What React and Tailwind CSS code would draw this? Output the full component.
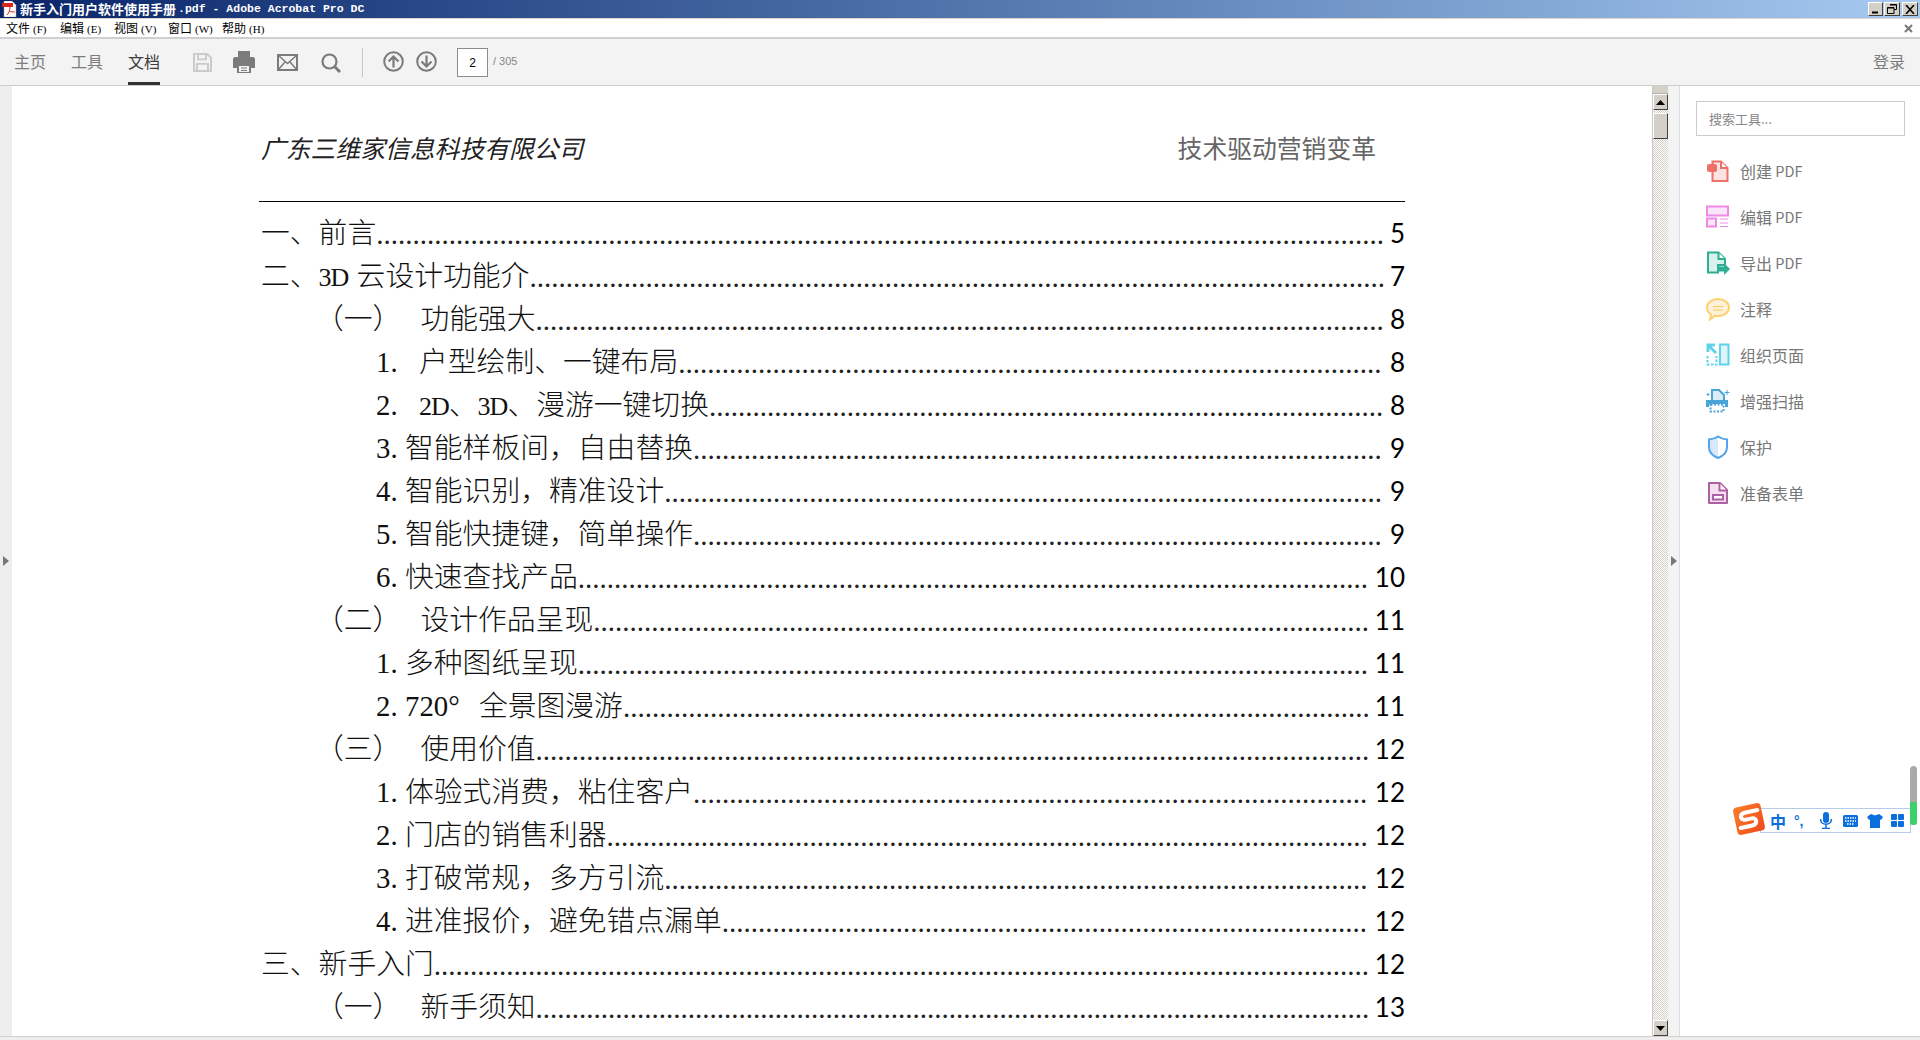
const cjk = "font-['Noto_Sans_CJK_SC',sans-serif]";

const Tight = ({ children }) => <span className="text-[26px] tracking-[-1px]">{children}</span>;

const rows = [
  { ind: 'pl-[2px]', text: '一、前言', dots: 139, page: '5' },
  { ind: 'pl-[2px]', text: <>二、<Tight>3D</Tight><span className="ml-[1px]"> </span>云设计功能介</>, dots: 118, page: '7' },
  { ind: 'pl-[56px]', text: '（一）', gap: 'w-[19px]', rest: '功能强大', dots: 117, page: '8' },
  { ind: 'pl-[117px]', num: '1.', numw: 'w-[43px]', text: '户型绘制、一键布局', dots: 97, page: '8' },
  { ind: 'pl-[117px]', num: '2.', numw: 'w-[43px]', text: <><Tight>2D</Tight>、<Tight>3D</Tight>、漫游一键切换</>, dots: 93, page: '8' },
  { ind: 'pl-[117px]', num: '3.', numw: 'w-[29px]', text: '智能样板间，自由替换', dots: 95, page: '9' },
  { ind: 'pl-[117px]', num: '4.', numw: 'w-[29px]', text: '智能识别，精准设计', dots: 99, page: '9' },
  { ind: 'pl-[117px]', num: '5.', numw: 'w-[29px]', text: '智能快捷键，简单操作', dots: 95, page: '9' },
  { ind: 'pl-[117px]', num: '6.', numw: 'w-[29px]', text: '快速查找产品', dots: 109, page: '10' },
  { ind: 'pl-[56px]', text: '（二）', gap: 'w-[19px]', rest: '设计作品呈现', dots: 107, page: '11' },
  { ind: 'pl-[117px]', num: '1.', numw: 'w-[29px]', text: '多种图纸呈现', dots: 109, page: '11' },
  { ind: 'pl-[117px]', num: '2.', numw: 'w-[29px]', text: <>720°<span className="ml-[12px]"> </span>全景图漫游</>, dots: 103, page: '11' },
  { ind: 'pl-[56px]', text: '（三）', gap: 'w-[19px]', rest: '使用价值', dots: 115, page: '12' },
  { ind: 'pl-[117px]', num: '1.', numw: 'w-[29px]', text: '体验式消费，粘住客户', dots: 93, page: '12' },
  { ind: 'pl-[117px]', num: '2.', numw: 'w-[29px]', text: '门店的销售利器', dots: 105, page: '12' },
  { ind: 'pl-[117px]', num: '3.', numw: 'w-[29px]', text: '打破常规，多方引流', dots: 97, page: '12' },
  { ind: 'pl-[117px]', num: '4.', numw: 'w-[29px]', text: '进准报价，避免错点漏单', dots: 89, page: '12' },
  { ind: 'pl-[2px]', text: '三、新手入门', dots: 129, page: '12' },
  { ind: 'pl-[56px]', text: '（一）', gap: 'w-[19px]', rest: '新手须知', dots: 115, page: '13' },
];

function TocRow({ r }) {
  return (
    <div className={`flex h-[43px] items-center whitespace-nowrap text-[28.800px] leading-[43px] text-[#111] font-light ${r.ind} font-['Liberation_Serif','Noto_Sans_CJK_SC',serif]`}>
      {r.num && <span className={`shrink-0 ${r.numw}`}>{r.num}</span>}
      <span className="shrink-0">{r.text}</span>
      {r.gap && <span className={`shrink-0 ${r.gap}`} />}
      {r.rest && <span className="shrink-0">{r.rest}</span>}
      <span className="mt-[2px] shrink-0 text-[29px] font-normal text-[#222]">{'.'.repeat(r.dots)}</span>
      <span className="ml-auto shrink-0 pl-[2px] font-['Lato',sans-serif] text-[26px] font-normal text-black">{r.page}</span>
    </div>
  );
}

const WinBtn = ({ children, cls }) => (
  <div className={`flex h-[14px] items-center justify-center border border-t-white border-l-white border-r-[#404040] border-b-[#404040] bg-[#d4d0c8] ${cls}`}>{children}</div>
);

const ScrollBtn = ({ up }) => (
  <div className="flex h-[16px] w-[15px] items-center justify-center border border-t-white border-l-white border-r-[#404040] border-b-[#404040] bg-[#d4d0c8]">
    <svg width="9" height="5" viewBox="0 0 9 5"><path d={up ? 'M4.5 0 L9 5 H0 Z' : 'M0 0 H9 L4.5 5 Z'} fill="#000" /></svg>
  </div>
);

const tools = [
  { label: '创建', suf: ' PDF', icon: (
    <svg width="24" height="24" viewBox="0 0 24 24"><path d="M6.5 2.5H15l6.5 6.5v13h-15z" fill="#fbe3e1" stroke="#ee7168" strokeWidth="2" /><path d="M15 2.5V9h6.5" fill="#fff" stroke="#ee7168" strokeWidth="2" /><rect x="1" y="5" width="10" height="8" rx="2" fill="#ee7168" /></svg>) },
  { label: '编辑', suf: ' PDF', icon: (
    <svg width="24" height="24" viewBox="0 0 24 24"><rect x="1" y="1.500" width="21" height="9" fill="#f9e6f8" stroke="#ee8ae6" strokeWidth="2" /><rect x="1" y="13.500" width="9" height="8" fill="#f9e6f8" stroke="#ee8ae6" strokeWidth="2" /><path d="M14 14h8M14 18h8M14 21.500h8" stroke="#ee8ae6" strokeWidth="1" /></svg>) },
  { label: '导出', suf: ' PDF', icon: (
    <svg width="24" height="24" viewBox="0 0 24 24"><path d="M2 1.500h10.500L19 8v6H12v7.500H2z" fill="#d8f1ea" stroke="#2eae93" strokeWidth="2" /><path d="M12.500 1.500V8H19" fill="#fff" stroke="#2eae93" strokeWidth="2" /><path d="M12 15.500h6V12l6 6-6 6v-3.500h-6z" fill="#2eae93" /></svg>) },
  { label: '注释', icon: (
    <svg width="24" height="24" viewBox="0 0 24 24"><path d="M12 2c6 0 11 3.500 11 8.500S18 19 12 19c-1 0-2 0-3-.3L4 22.500l1-5C2.500 16 1 13.500 1 10.500 1 5.500 6 2 12 2z" fill="#fdf2d9" stroke="#fbd26f" strokeWidth="2" /><path d="M7 9.500h10M7 13h10" stroke="#fbc85a" strokeWidth="1" /></svg>) },
  { label: '组织页面', icon: (
    <svg width="24" height="24" viewBox="0 0 24 24"><rect x="14" y="1.500" width="8.500" height="20" fill="#def5fa" stroke="#5fd3ea" strokeWidth="2" /><path d="M1.500 13v8.500h9V13" fill="none" stroke="#5fd3ea" strokeWidth="2" strokeDasharray="2.500 1.500" /><path d="M2 2l8 8M2 9V2h7" fill="none" stroke="#5fd3ea" strokeWidth="3" /></svg>) },
  { label: '增强扫描', icon: (
    <svg width="24" height="24" viewBox="0 0 24 24"><path d="M6 1h7l5 5v7H6z" fill="#d9edf8" stroke="#4ba3d8" strokeWidth="2" /><path d="M0 11h22v7h-3v-3H3v3H0z" fill="#4ba3d8" /><path d="M4.500 15.500h13v7h-13z" fill="none" stroke="#4ba3d8" strokeWidth="2" strokeDasharray="2 1.500" /><path d="M21 1v5M18.500 3.500h5M2 4v3M.5 5.500h3" stroke="#4ba3d8" strokeWidth="1" /></svg>) },
  { label: '保护', icon: (
    <svg width="24" height="24" viewBox="0 0 24 24"><path d="M12 1.500C9 3.500 6 4.300 3 4.500v8c0 5 4 8.500 9 10.500 5-2 9-5.500 9-10.500v-8c-3-.2-6-1-9-3z" fill="#d7e9f9" /><path d="M12 2.500c3 1.500 5 2.200 8 2.800v7.200c0 4.500-4 8-8 9.500z" fill="#fff" /><path d="M12 1.500C9 3.500 6 4.300 3 4.500v8c0 5 4 8.500 9 10.500 5-2 9-5.500 9-10.500v-8c-3-.2-6-1-9-3z" fill="none" stroke="#54a4ea" strokeWidth="2" /></svg>) },
  { label: '准备表单', icon: (
    <svg width="24" height="24" viewBox="0 0 24 24"><path d="M3 2h11l7 7v13H3z" fill="#f3e1ef" stroke="#ad60a4" strokeWidth="2" strokeLinejoin="round" /><path d="M13.500 2v7.500H21" fill="#fff" stroke="#ad60a4" strokeWidth="2" /><rect x="7" y="14" width="10" height="4.500" fill="#fff" stroke="#ad60a4" strokeWidth="2" /></svg>) },
];

export default function App() {
  return (
    <div className={`flex h-screen w-full flex-col overflow-hidden bg-white ${cjk}`}>
      {/* title bar */}
      <div className="flex h-[19px] shrink-0 items-start border-b border-[#ddd5c8] bg-gradient-to-r from-[#0a246a] to-[#a6caf0] pr-[2px]">
        <svg className="mt-[1px] ml-[2px]" width="15" height="16" viewBox="0 0 15 16">
          <path d="M2 0h8l4 4v12H2z" fill="#fff" stroke="#aaa" strokeWidth=".5" />
          <rect x="0" y="2" width="11" height="4" fill="#d8281c" />
          <path d="M5 14c2-2 3-5 3-8M7 10c2 1 4 1 6 1" fill="none" stroke="#d8281c" />
        </svg>
        <div className="ml-[3px] flex h-[18px] items-center text-[13px] leading-[18px] font-bold whitespace-pre text-white">
          新手入门用户软件使用手册<span className="ml-[2px] font-['Liberation_Mono',monospace] text-[11.500px]">.pdf - Adobe Acrobat Pro DC</span>
        </div>
        <div className="ml-auto flex items-center pt-[2px]">
          <WinBtn cls="w-[15px]"><svg width="9" height="9" viewBox="0 0 9 9"><rect x="1" y="6.500" width="6" height="2" fill="#000" /></svg></WinBtn>
          <WinBtn cls="ml-[1px] w-[16px]"><svg width="10" height="10" viewBox="0 0 10 10"><path d="M3 .5h6.500v5H7M.5 3.500h6.500v6H.5z" fill="none" stroke="#000" /><path d="M3 1h6.500M.5 4h6.500" stroke="#000" /></svg></WinBtn>
          <WinBtn cls="ml-[2px] w-[16px]"><svg width="10" height="9" viewBox="0 0 10 9"><path d="M1 0l8 9M9 0L1 9" stroke="#000" strokeWidth="1.600" /></svg></WinBtn>
        </div>
      </div>

      {/* menu bar */}
      <div className="flex h-[20px] shrink-0 items-center border-b-2 border-[#cfcfcf] bg-white pl-[6px] text-[12px] leading-[18px] text-black">
        {[['文件', 'F'], ['编辑', 'E'], ['视图', 'V'], ['窗口', 'W'], ['帮助', 'H']].map(([t, k]) => (
          <span key={k} className="w-[54px] whitespace-nowrap">
            {t}<span className="ml-[3px] font-['Liberation_Serif',serif] text-[11px]">({k})</span>
          </span>
        ))}
        <svg className="mr-[7px] ml-auto" width="9" height="9" viewBox="0 0 9 9"><path d="M1 1l7 7M8 1L1 8" stroke="#777" strokeWidth="2" /></svg>
      </div>

      {/* toolbar */}
      <div className="flex h-[47px] shrink-0 items-stretch border-b border-[#cccccc] bg-[#f3f3f3] pr-[15px]">
        <div className="ml-[14px] flex w-[57px] items-center pb-[2px] text-[16px] text-[#7d7d7d]">主页</div>
        <div className="flex w-[57px] items-center pb-[2px] text-[16px] text-[#7d7d7d]">工具</div>
        <div className="flex h-[46px] w-[32px] items-center border-b-[3px] border-[#333333] text-[16px] text-[#3d3d3d]">文档</div>
        <svg className="mt-[14px] ml-[33px]" width="19" height="19" viewBox="0 0 19 21" preserveAspectRatio="none">
          <path d="M1 1h13l4 4v15H1z" fill="none" stroke="#cbcbcb" strokeWidth="2" />
          <rect x="5" y="1" width="8" height="6" fill="none" stroke="#cbcbcb" strokeWidth="2" />
          <rect x="4" y="12" width="11" height="8" fill="none" stroke="#cbcbcb" strokeWidth="2" />
        </svg>
        <svg className="mt-[12px] ml-[21px]" width="22" height="22" viewBox="0 0 22 22">
          <rect x="5" y="0" width="12" height="6" fill="#7b7b7b" />
          <path d="M2 6h18c1 0 2 1 2 2v9h-4v-4H4v4H0V8c0-1 1-2 2-2z" fill="#7b7b7b" />
          <path d="M5 14h12v8H5z" fill="none" stroke="#7b7b7b" strokeWidth="2" />
          <path d="M8 17h6M8 19.500h6" stroke="#7b7b7b" />
        </svg>
        <svg className="mt-[15px] ml-[22px]" width="21" height="17" viewBox="0 0 21 17">
          <rect x="1" y="1" width="19" height="15" fill="none" stroke="#7b7b7b" strokeWidth="2" />
          <path d="M1.500 1.500l9 8 9-8M1.500 15.500l6.500-7.500M19.500 15.500L13 8" fill="none" stroke="#7b7b7b" strokeWidth="1.500" />
        </svg>
        <svg className="mt-[14px] ml-[23px]" width="20" height="20" viewBox="0 0 20 20">
          <circle cx="8.500" cy="8.500" r="7" fill="none" stroke="#7b7b7b" strokeWidth="2.200" />
          <path d="M13.500 13.500l5.500 5.500" stroke="#7b7b7b" strokeWidth="3" />
        </svg>
        <div className="mt-[9px] ml-[21px] h-[29px] w-px bg-[#c8c8c8]" />
        <svg className="mt-[12px] ml-[20px]" width="21" height="21" viewBox="0 0 21 21">
          <circle cx="10.500" cy="10.500" r="9.300" fill="none" stroke="#7b7b7b" strokeWidth="2" />
          <path d="M10.500 16.500V5.500M5.500 10.500l5-5 5 5" fill="none" stroke="#7b7b7b" strokeWidth="2.200" />
        </svg>
        <svg className="mt-[12px] ml-[12px]" width="21" height="21" viewBox="0 0 21 21">
          <circle cx="10.500" cy="10.500" r="9.300" fill="none" stroke="#7b7b7b" strokeWidth="2" />
          <path d="M10.500 4.500v11M5.500 10.500l5 5 5-5" fill="none" stroke="#7b7b7b" strokeWidth="2.200" />
        </svg>
        <div className="mt-[9px] ml-[20px] flex h-[29px] w-[31px] items-center justify-center border border-[#8c8c8c] bg-white font-['Liberation_Sans',sans-serif] text-[12px] text-black">2</div>
        <div className="ml-[5px] flex items-center pb-[1px] font-['Liberation_Sans',sans-serif] text-[11px] text-[#888888]">/ 305</div>
        <div className="ml-auto flex items-center pb-[2px] text-[16px] text-[#7d7d7d]">登录</div>
      </div>

      {/* body */}
      <div className="relative flex min-h-0 flex-1">
        <div className="relative w-[12px] shrink-0 bg-[#eeeeee]">
          <div className="absolute top-[470px] left-[3px] h-0 w-0 border-y-[5px] border-l-[6px] border-y-transparent border-l-[#777777]" />
        </div>

        <div className="min-w-0 flex-1 overflow-hidden bg-white pt-[46px] pr-[247px] pl-[247px]">
          <div className="flex h-[30px] items-center justify-between pr-[29px] pl-[2px] text-[24.800px] leading-[30px]">
            <span className="text-[#222] italic">广东三维家信息科技有限公司</span>
            <span className="text-[#666]">技术驱动营销变革</span>
          </div>
          <div className="mt-[39px] mb-[10px] h-px bg-black" />
          {rows.map((r, i) => <TocRow key={i} r={r} />)}
        </div>

        {/* scrollbar */}
        <div className="flex w-[16px] shrink-0 flex-col border-l border-[#c8c8c8] bg-[#d4d0c8] bg-[repeating-conic-gradient(#d4d0c8_0_25%,#ffffff_0_50%)] bg-[length:2px_2px]">
          <div className="h-[8px] w-[15px] border-b border-[#b0b0b0] bg-[#d4d0c8]" />
          <ScrollBtn up />
          <div className="mt-[3px] h-[26px] w-[15px] border border-t-white border-l-white border-r-[#404040] border-b-[#404040] bg-[#d4d0c8]" />
          <div className="flex-1" />
          <ScrollBtn />
        </div>

        <div className="relative w-[12px] shrink-0 border-r border-[#dddddd] bg-[#f3f3f3]">
          <div className="absolute top-[470px] left-[3px] h-0 w-0 border-y-[5px] border-l-[6px] border-y-transparent border-l-[#777777]" />
        </div>

        {/* tools panel */}
        <div className="w-[240px] shrink-0 bg-white pt-[15px] pr-[15px] pl-[16px]">
          <div className="flex h-[35px] items-center border border-[#cccccc] pl-[12px] text-[13px] text-[#888888]">搜索工具...</div>
          <div className="mt-[12px] flex flex-col">
            {tools.map((t) => (
              <div key={t.label} className="flex h-[46px] items-center pl-[10px] text-[16px] whitespace-pre text-[#777777]">
                <span className="flex w-[34px] shrink-0 items-center">{t.icon}</span>
                {t.label}{t.suf && <span className="text-[14.500px]">{t.suf}</span>}
              </div>
            ))}
          </div>
        </div>

        {/* Sogou IME */}
        <div className="absolute top-[722px] left-[1760px] flex h-[25px] w-[151px] items-center border border-[#b5cbe8] bg-white pl-[9px] text-[#0a6fdc]">
          <span className="w-[24px] text-[16px] leading-none font-bold">中</span>
          <span className="w-[19px] font-['Liberation_Sans',sans-serif] text-[14px] leading-none font-bold">°,</span>
          <svg className="ml-[6px]" width="14" height="17" viewBox="0 0 14 17"><rect x="4" y="0" width="6" height="11" rx="3" fill="#0a6fdc" /><path d="M1.500 7c0 7 11 7 11 0M7 13v3M3 16.500h8" fill="none" stroke="#0a6fdc" strokeWidth="1.500" /></svg>
          <svg className="ml-[10px]" width="15" height="12" viewBox="0 0 15 12"><rect width="15" height="12" rx="1.500" fill="#0a6fdc" /><path d="M2 3h11M2 6h11M4 9h7" stroke="#fff" strokeWidth="1.300" strokeDasharray="1.500 1" /></svg>
          <svg className="ml-[9px]" width="16" height="14" viewBox="0 0 16 14"><path d="M4 0l4 1.500L12 0l4 3-2 3-1-.5V14H3V5.500L2 6 0 3z" fill="#0a6fdc" /></svg>
          <svg className="ml-[8px]" width="13" height="13" viewBox="0 0 13 13"><rect width="6" height="6" rx="1" fill="#0a6fdc" /><rect x="7" width="6" height="6" rx="1" fill="#0a6fdc" /><rect y="7" width="6" height="6" rx="1" fill="#0a6fdc" /><rect x="7" y="7" width="6" height="6" rx="1" fill="#0a6fdc" /></svg>
        </div>
        <div className="absolute top-[719px] left-[1735px] h-[28px] w-[28px] -rotate-12 rounded-[4px] bg-gradient-to-br from-[#f97d2b] to-[#f0471c]">
          <svg width="28" height="28" viewBox="0 0 28 28"><path d="M24 7H11c-6 0-6 7 0 7h6c5 0 5 7-1 7H4" fill="none" stroke="#fff" strokeWidth="4" strokeLinecap="round" /></svg>
        </div>
        <div className="absolute top-[680px] left-[1910px] flex h-[59px] w-[7px] flex-col overflow-hidden rounded-full bg-[#aaaaaa]">
          <div className="mt-[36px] flex-1 bg-[#3cd068]" />
        </div>
      </div>

      <div className="h-[4px] shrink-0 border-t border-[#d4d0c8] bg-[#eeeeee]" />
    </div>
  );
}
